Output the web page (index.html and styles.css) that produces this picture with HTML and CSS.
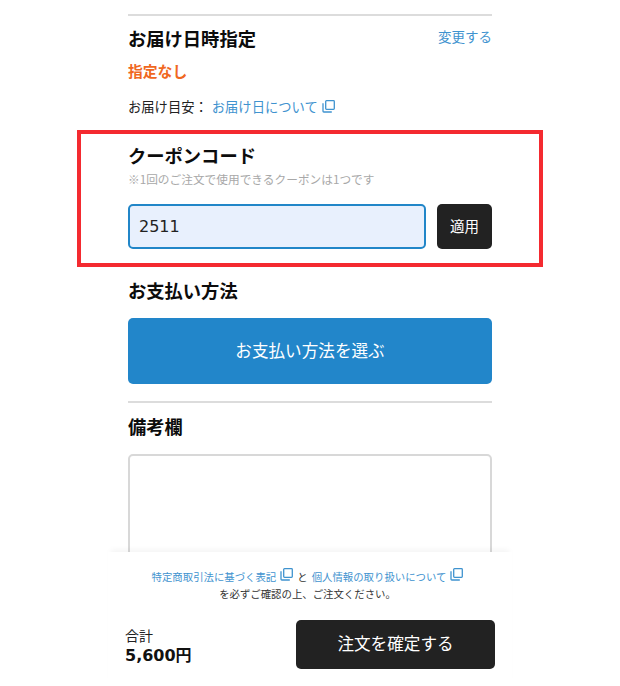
FILE: index.html
```html
<!DOCTYPE html>
<html lang="ja">
<head>
<meta charset="utf-8">
<title>注文確認</title>
<link rel="stylesheet" href="styles.css">
</head>
<body>
<div class="page">
  <main class="content">
    <hr class="rule rule-top">
    <section class="delivery">
      <div class="head-row">
        <h2 class="title">お届け日時指定</h2>
        <a class="link change">変更する</a>
      </div>
      <p class="unset">指定なし</p>
      <p class="estimate">お届け目安：<a class="link est-link">お届け日について<svg class="copy" viewBox="0 0 13 13"><path d="M4.5 .7h7a.8.8 0 0 1 .8.8v7a.8.8 0 0 1-.8.8h-7a.8.8 0 0 1-.8-.8v-7a.8.8 0 0 1 .8-.8z"/><path d="M1 3.2v8a.8.8 0 0 0 .8.8h8"/></svg></a></p>
    </section>
    <section class="coupon">
      <h2 class="title">クーポンコード</h2>
      <p class="coupon-note">※1回のご注文で使用できるクーポンは1つです</p>
      <div class="coupon-row">
        <div class="coupon-input">2511</div>
        <button class="coupon-btn">適用</button>
      </div>
    </section>
    <section class="payment">
      <h2 class="title">お支払い方法</h2>
      <button class="pay-btn">お支払い方法を選ぶ</button>
    </section>
    <hr class="rule">
    <section class="remarks">
      <h2 class="title">備考欄</h2>
      <div class="textarea"></div>
    </section>
  </main>
  <footer class="footer">
    <p class="terms"><a class="link">特定商取引法に基づく表記<svg class="copy copy-lg" viewBox="0 0 13 13"><path d="M4.5 .7h7a.8.8 0 0 1 .8.8v7a.8.8 0 0 1-.8.8h-7a.8.8 0 0 1-.8-.8v-7a.8.8 0 0 1 .8-.8z"/><path d="M1 3.2v8a.8.8 0 0 0 .8.8h8"/></svg></a><span class="and">と</span><a class="link">個人情報の取り扱いについて<svg class="copy copy-lg" viewBox="0 0 13 13"><path d="M4.5 .7h7a.8.8 0 0 1 .8.8v7a.8.8 0 0 1-.8.8h-7a.8.8 0 0 1-.8-.8v-7a.8.8 0 0 1 .8-.8z"/><path d="M1 3.2v8a.8.8 0 0 0 .8.8h8"/></svg></a></p>
    <p class="confirm">を必ずご確認の上、ご注文ください。</p>
    <div class="order-row">
      <div class="total">
        <div class="total-label">合計</div>
        <div class="total-value">5,600円</div>
      </div>
      <button class="order-btn">注文を確定する</button>
    </div>
  </footer>
</div>
</body>
</html>
```
FILE: styles.css
```css
* { box-sizing: border-box; }
html, body { margin: 0; padding: 0; }
body {
  background: #fff;
  color: #111;
  font-family: "Noto Sans CJK JP", "Liberation Sans", sans-serif;
  overflow: hidden;
}
.page {
  position: relative;
  width: 620px;
  height: 686px;
  overflow: hidden;
}
.content {
  width: 364px;
  margin-left: 128px;
  padding-top: 14px;
}
.rule {
  margin: 0;
  border: 0;
  height: 2px;
  background: #dcdcdc;
}
.title {
  margin: 0;
  font-size: 18.3px;
  line-height: 26px;
  font-weight: 700;
  color: #0c0c0c;
}
.link { color: #3f93cf; text-decoration: none; }
.delivery { padding-top: 9px; }
.head-row {
  display: flex;
  justify-content: space-between;
  align-items: flex-start;
}
.change { font-size: 13.5px; line-height: 22px; }
.unset {
  margin: 9px 0 0;
  font-size: 14.8px;
  line-height: 22px;
  font-weight: 700;
  color: #f0681f;
}
.estimate {
  margin: 14px 0 0;
  font-size: 13.3px;
  line-height: 22px;
  color: #222;
  white-space: nowrap;
}
.est-link { margin-left: 4px; }
.copy {
  width: 13px;
  height: 13px;
  margin-left: 4px;
  vertical-align: -1px;
  fill: none;
  stroke: #3f93cf;
  stroke-width: 1.3;
}
.copy-lg { vertical-align: 0; }
.coupon {
  margin: 12px -51px 0;
  padding: 8px 47px 13px;
  height: 137px;
  border: 4px solid #f42a30;
}
.coupon-note {
  margin: 1px 0 0;
  font-size: 11.7px;
  line-height: 20px;
  color: #a8a8a8;
}
.coupon-row {
  display: flex;
  justify-content: space-between;
  margin-top: 15px;
}
.coupon-input {
  width: 298px;
  height: 45px;
  padding-left: 9px;
  border: 2px solid #2186c8;
  border-radius: 5px;
  background: #e8f0fd;
  font-family: "DejaVu Sans", sans-serif;
  font-size: 16px;
  line-height: 41px;
  color: #222;
}
.coupon-btn {
  width: 55px;
  height: 45px;
  padding: 0 0 3px;
  border: 0;
  border-radius: 5px;
  background: #222;
  color: #fff;
  font-family: inherit;
  font-size: 14.5px;
}
.payment { padding-top: 10px; }
.pay-btn {
  display: block;
  width: 100%;
  height: 66px;
  margin-top: 15px;
  padding: 0 0 3px;
  border: 0;
  border-radius: 5px;
  background: #2286ca;
  color: #fff;
  font-family: inherit;
  font-size: 16.6px;
}
.payment + .rule { margin-top: 17px; }
.remarks { padding-top: 10px; }
.textarea {
  height: 200px;
  margin-top: 15px;
  border: 2px solid #d8d8d8;
  border-radius: 5px;
}
.footer {
  position: absolute;
  left: 108px;
  top: 552px;
  width: 404px;
  height: 134px;
  background: #fff;
  box-shadow: 0 -5px 6px -3px rgba(0, 0, 0, 0.05);
  padding-top: 16px;
}
.terms {
  margin: 0;
  padding-right: 5px;
  display: flex;
  justify-content: center;
  align-items: center;
  font-size: 10.4px;
  line-height: 18px;
  white-space: nowrap;
}
.and { margin: 0 4px; color: #333; }
.confirm {
  margin: 0;
  padding-right: 5px;
  text-align: center;
  font-size: 10.4px;
  line-height: 16px;
  color: #333;
}
.order-row {
  display: flex;
  justify-content: space-between;
  align-items: flex-start;
  margin-top: 18px;
  padding: 0 17px;
}
.total { padding-top: 8px; }
.total-label { font-size: 14px; line-height: 15px; color: #222; }
.total-value {
  margin-top: 2px;
  font-family: "DejaVu Sans", "Noto Sans CJK JP", sans-serif;
  font-size: 16px;
  line-height: 21px;
  font-weight: 700;
  color: #111;
}
.order-btn {
  width: 199px;
  height: 49px;
  padding: 0 0 3px;
  border: 0;
  border-radius: 5px;
  background: #222;
  color: #fff;
  font-family: inherit;
  font-size: 16.6px;
}
```
